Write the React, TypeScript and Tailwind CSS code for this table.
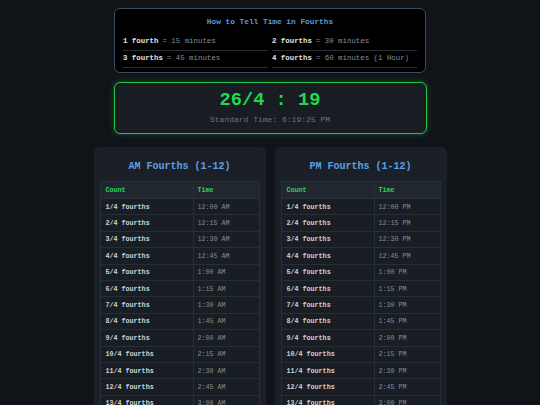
import React from 'react';

const guide = [
    { label: '1 fourth', rest: '= 15 minutes' },
    { label: '2 fourths', rest: '= 30 minutes' },
    { label: '3 fourths', rest: '= 45 minutes' },
    { label: '4 fourths', rest: '= 60 minutes (1 Hour)' },
];

const buildRows = (suffix: string) =>
    Array.from({ length: 13 }, (_, i) => {
        const total = i * 15;
        const h = Math.floor(total / 60);
        const m = total % 60;
        return {
            count: `${i + 1}/4 fourths`,
            time: `${h === 0 ? 12 : h}:${m.toString().padStart(2, '0')} ${suffix}`,
        };
    });

const FourthsPanel: React.FC<{ title: string; suffix: string }> = ({ title, suffix }) => {
    const rows = buildRows(suffix);
    return (
        <div className="w-[172px] bg-[#1b2028] rounded-md px-[6px] pt-[13px]">
            <h2 className="text-center text-[10px] leading-[14px] font-bold text-[#5e9fe4] mb-[7px]">{title}</h2>
            <table className="w-full border-collapse text-[6.7px] leading-[8px]">
                <thead>
                    <tr className="bg-[#21272f]">
                        <th className="w-[93px] h-[17px] px-[5px] text-left font-bold text-[#2fd35a] border border-[#282e36]">Count</th>
                        <th className="h-[17px] px-[4px] text-left font-bold text-[#2fd35a] border border-[#282e36]">Time</th>
                    </tr>
                </thead>
                <tbody>
                    {rows.map((r) => (
                        <tr key={r.count} className="bg-[#191e25]">
                            <td className="h-[16.4px] px-[5px] font-bold text-[#cfd2d6] border border-[#282e36]">{r.count}</td>
                            <td className="h-[16.4px] px-[4px] text-[#868b93] border border-[#282e36]">{r.time}</td>
                        </tr>
                    ))}
                </tbody>
            </table>
        </div>
    );
};

export default function App() {
    return (
        <div
            className="h-[405px] bg-[#101318] flex flex-col items-center pt-[8px] overflow-hidden"
            style={{ fontFamily: '"Liberation Mono", "DejaVu Sans Mono", monospace' }}
        >
            {/* Guide box */}
            <div className="w-[312px] bg-black border border-[#3a4a5e] rounded-md px-[8px] pt-[7px] pb-[4px]">
                <h1 className="text-center text-[7.8px] leading-[12px] font-bold text-[#5b9bdb] mb-[6px]">
                    How to Tell Time in Fourths
                </h1>
                <div className="grid grid-cols-2 gap-x-[4px]">
                    {guide.map((g) => (
                        <div key={g.label} className="h-[17px] flex items-center border-b border-[#2a2f36] text-[7.4px]">
                            <span className="font-bold text-[#e2e4e6]">{g.label}</span>
                            <span className="ml-[4px] text-[#8a8e94]">{g.rest}</span>
                        </div>
                    ))}
                </div>
            </div>

            {/* Clock */}
            <div className="w-[313px] mt-[9px] bg-[#181c23] border-[1.5px] border-[#27c24c] rounded-md pt-[6px] pb-[7px] flex flex-col items-center shadow-[0_0_6px_rgba(34,197,94,0.35)]">
                <div className="text-[18.7px] leading-[22px] font-bold text-[#22d84f]">26/4 : 19</div>
                <div className="mt-[3px] text-[8px] leading-[12px] text-[#6f747b]">Standard Time: 6:19:25 PM</div>
            </div>

            {/* Tables */}
            <div className="mt-[13px] flex gap-[9px]">
                <FourthsPanel title="AM Fourths (1-12)" suffix="AM" />
                <FourthsPanel title="PM Fourths (1-12)" suffix="PM" />
            </div>
        </div>
    );
}
